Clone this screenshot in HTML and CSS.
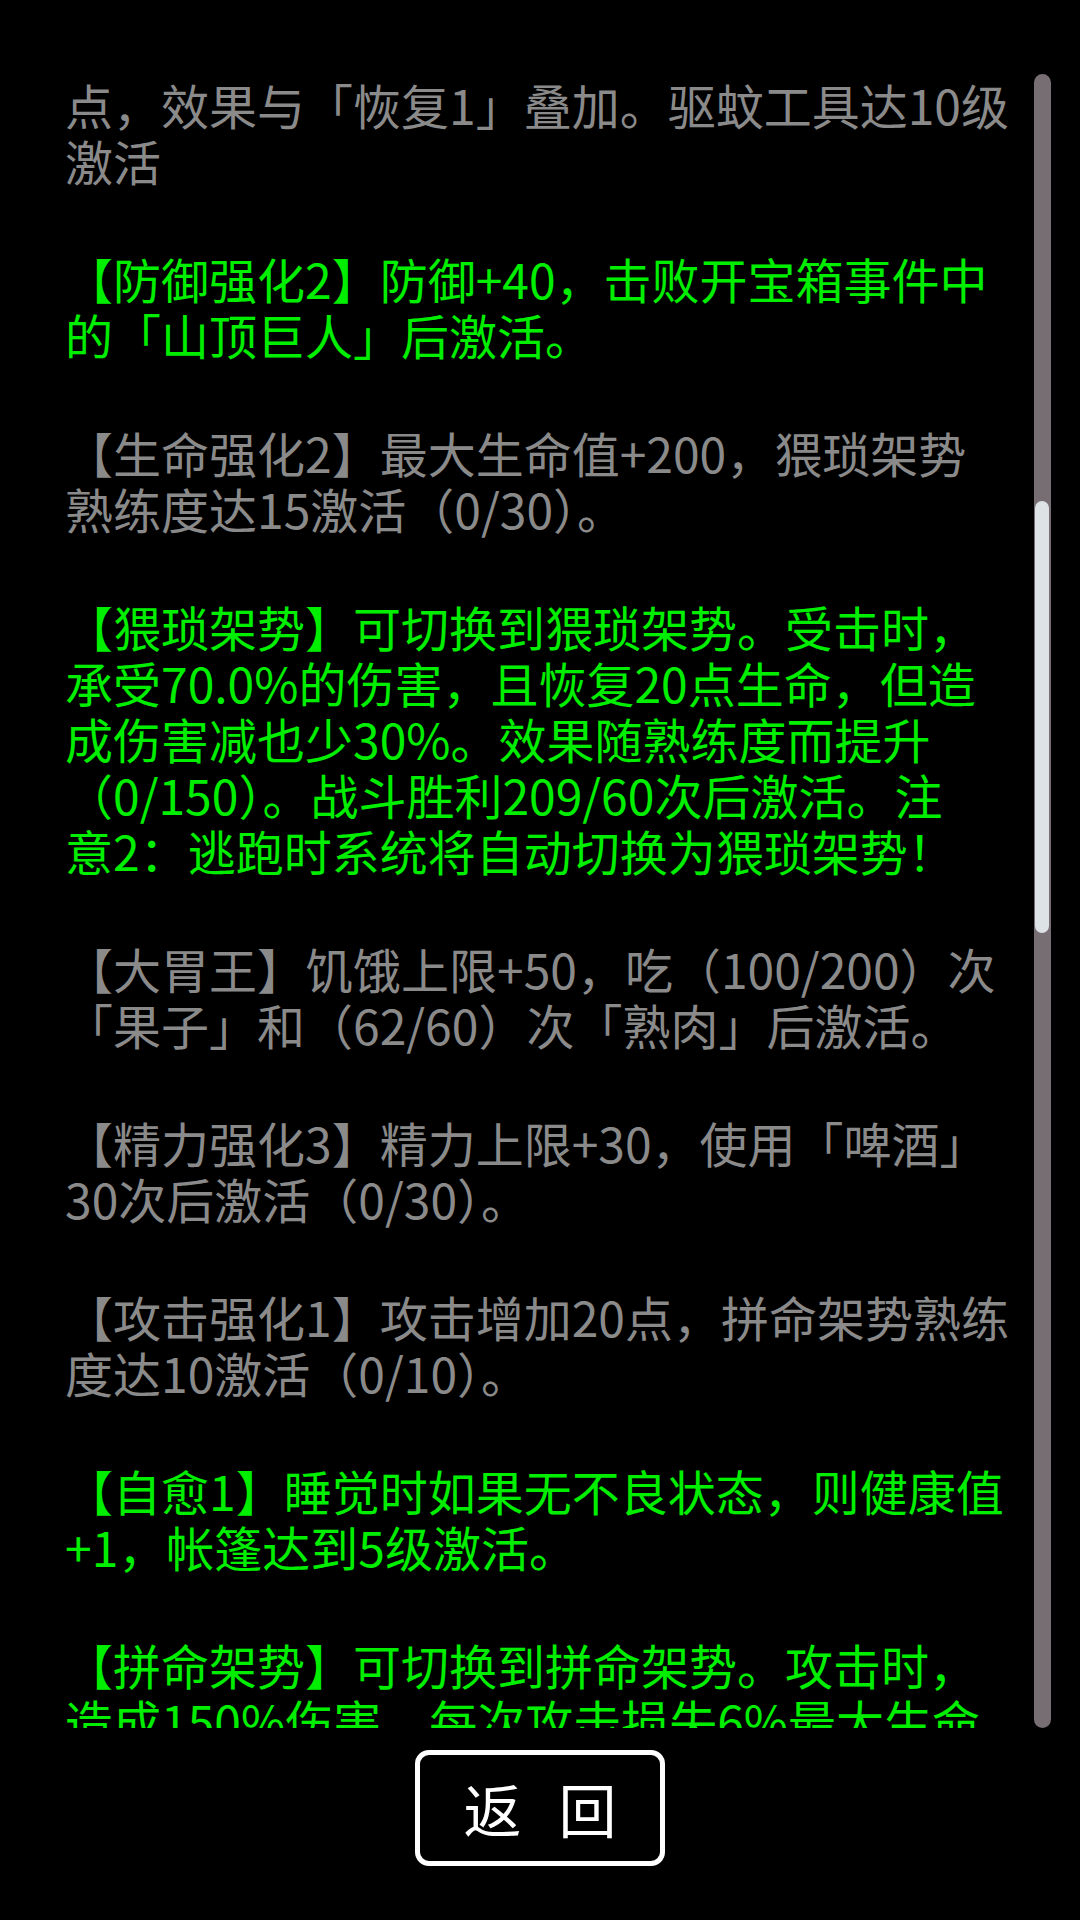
FILE: index.html
```html
<!DOCTYPE html>
<html lang="zh-CN">
<head>
    <meta charset="UTF-8">
    <meta name="viewport" content="width=device-width, initial-scale=1.0">
    <title>技能列表</title>
    <link rel="stylesheet" href="styles.css">
</head>
<body>
    <div class="screen">
        <div class="skill-panel">
            <div class="skill-list">
                <p class="skill">点，效果与「恢复1」叠加。驱蚊工具达10级<br>激活</p>
                <p class="skill active">【防御强化2】防御+40，击败开宝箱事件中<br>的「山顶巨人」后激活。</p>
                <p class="skill">【生命强化2】最大生命值+200，猥琐架势<br>熟练度达15激活（0/30）。</p>
                <p class="skill active">【猥琐架势】可切换到猥琐架势。受击时，<br>承受70.0%的伤害，且恢复20点生命，但造<br>成伤害减也少30%。效果随熟练度而提升<br>（0/150）。战斗胜利209/60次后激活。注<br>意2：逃跑时系统将自动切换为猥琐架势！</p>
                <p class="skill">【大胃王】饥饿上限+50，吃（100/200）次<br>「果子」和（62/60）次「熟肉」后激活。</p>
                <p class="skill">【精力强化3】精力上限+30，使用「啤酒」<br>30次后激活（0/30）。</p>
                <p class="skill">【攻击强化1】攻击增加20点，拼命架势熟练<br>度达10激活（0/10）。</p>
                <p class="skill active">【自愈1】睡觉时如果无不良状态，则健康值<br>+1，帐篷达到5级激活。</p>
                <p class="skill active">【拼命架势】可切换到拼命架势。攻击时，<br>造成150%伤害，每次攻击损失6%最大生命<br>值。</p>
            </div>
            <div class="scrollbar">
                <div class="scroll-thumb"></div>
            </div>
        </div>
        <div class="footer">
            <button class="back-btn">返 回</button>
        </div>
    </div>
</body>
</html>
```

FILE: styles.css
```css
body {
    margin: 0;
    background-color: #000;
    font-family: "Noto Sans CJK SC", "Noto Sans", sans-serif;
}
.screen {
    display: flex;
    flex-direction: column;
    width: 1080px;
    height: 1920px;
}
.skill-panel {
    position: relative;
    margin-top: 74px;
    height: 1654px;
    overflow: hidden;
    padding: 2px 0 0 65px;
    box-sizing: border-box;
}
.skill-list {
    display: flex;
    flex-direction: column;
    gap: 62px;
}
.skill {
    margin: 0;
    font-size: 48px;
    line-height: 56px;
    white-space: nowrap;
    color: #8a8a8a;
}
.skill.active {
    color: #00ee00;
}
.scrollbar {
    position: absolute;
    top: 0;
    right: 29px;
    width: 17px;
    height: 100%;
    background-color: #776e73;
    border-radius: 9px;
}
.scroll-thumb {
    position: absolute;
    top: 427px;
    left: 1px;
    right: 2px;
    height: 432px;
    background-color: #dde2e6;
    border-radius: 8px;
}
.footer {
    display: flex;
    justify-content: center;
    padding-top: 22px;
}
.back-btn {
    width: 250px;
    height: 116px;
    border: 5px solid #fff;
    border-radius: 14px;
    background-color: #000;
    color: #fff;
    font-family: "Noto Sans CJK SC", sans-serif;
    font-size: 58px;
    letter-spacing: 12px;
    padding: 0 0 0 12px;
    cursor: pointer;
}
```
